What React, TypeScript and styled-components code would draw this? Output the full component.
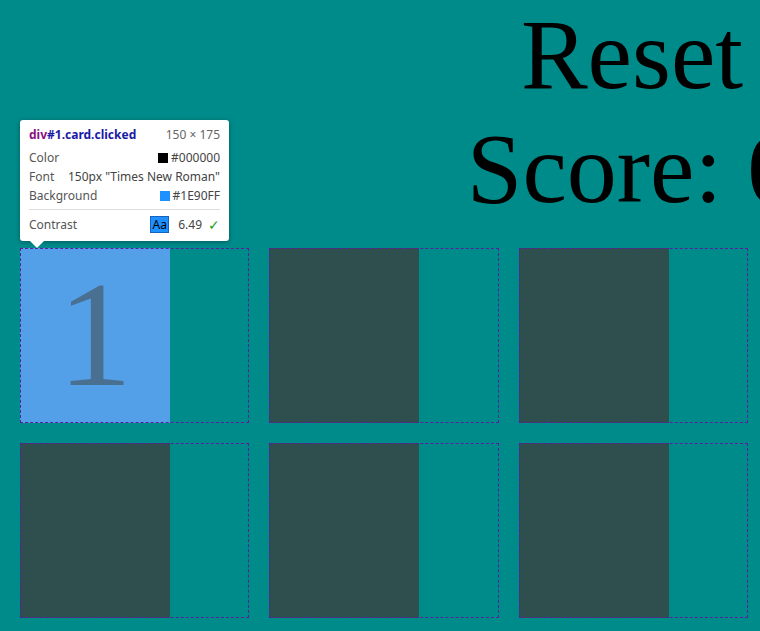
import React from "react";
import styled, { createGlobalStyle } from "styled-components";

const Global = createGlobalStyle`
  html, body { margin: 0; padding: 0; }
  body {
    background: #008b8b;
    font-family: "Liberation Serif", "Times New Roman", serif;
    overflow: hidden;
  }
`;

const Page = styled.div`
  position: relative;
  width: 760px;
  height: 631px;
  overflow: hidden;
`;

const Header = styled.div`
  display: flex;
  flex-direction: column;
  align-items: center;
  margin: -2px 0 0 506px;
  width: 252px;
  font-size: 100px;
  line-height: 114px;
  color: #000;
  white-space: nowrap;
`;

const HeaderLine = styled.div`
  flex: none;
`;

const Grid = styled.div`
  display: grid;
  grid-template-columns: repeat(3, 1fr);
  grid-auto-rows: 175px;
  gap: 20px;
  margin: 22px 12px 0 20px;
`;

const Cell = styled.div`
  position: relative;
  display: flex;
  &::after {
    content: "";
    position: absolute;
    inset: 0;
    border: 1px dashed #5a1e9e;
    pointer-events: none;
  }
`;

const Card = styled.div<{ $clicked?: boolean }>`
  position: relative;
  width: 150px;
  height: 175px;
  background: ${(p) => (p.$clicked ? "#1e90ff" : "#2f4f4f")};
  color: #000;
  font-size: 150px;
  text-align: center;
  font-family: "Liberation Serif", "Times New Roman", serif;
`;

const Highlight = styled.div`
  position: absolute;
  inset: 0;
  background: rgba(111, 168, 220, 0.66);
`;

const Tooltip = styled.div`
  position: absolute;
  left: 20px;
  top: 120px;
  width: 209px;
  box-sizing: border-box;
  padding: 5px 9px 7px 9px;
  background: #fff;
  border-radius: 3px;
  box-shadow: 0 1px 5px rgba(0, 0, 0, 0.35);
  font-family: "Noto Sans", "Open Sans", sans-serif;
  font-size: 12px;
  color: #555;
`;

const Arrow = styled.div`
  position: absolute;
  left: 10px;
  bottom: -7px;
  width: 0;
  height: 0;
  border-left: 7px solid transparent;
  border-right: 7px solid transparent;
  border-top: 7px solid #fff;
`;

const Row = styled.div<{ $gapBelow?: number }>`
  display: flex;
  align-items: center;
  justify-content: space-between;
  height: 19px;
  margin-bottom: ${(p) => p.$gapBelow ?? 0}px;
  white-space: nowrap;
`;

const Title = styled.span`
  font-weight: 700;
  color: #1a1aa6;
`;

const Tag = styled.span`
  color: #881280;
`;

const Dim = styled.span`
  color: #666;
`;

const Value = styled.span`
  display: flex;
  align-items: center;
  gap: 3px;
  color: #444;
`;

const Swatch = styled.span<{ $color: string }>`
  display: inline-block;
  width: 10px;
  height: 10px;
  background: ${(p) => p.$color};
`;

const Divider = styled.div`
  height: 1px;
  background: #ddd;
  margin: 4px 0 5px;
`;

const Badge = styled.span`
  display: inline-flex;
  align-items: center;
  justify-content: center;
  width: 19px;
  height: 17px;
  background: #1e90ff;
  color: #000;
  border: 1px solid #1565c0;
  box-sizing: border-box;
  margin-right: 6px;
`;

const Check = styled.span`
  color: #1f9d1f;
  font-size: 14px;
  margin-left: 3px;
`;

const cards = [1, 2, 3, 4, 5, 6];

export default function App() {
  return (
    <Page>
      <Global />
      <Header>
        <HeaderLine>Reset</HeaderLine>
        <HeaderLine>Score: 0</HeaderLine>
      </Header>
      <Grid>
        {cards.map((n) => (
          <Cell key={n}>
            {n === 1 ? (
              <Card $clicked id="1" className="card clicked">
                1
                <Highlight />
              </Card>
            ) : (
              <Card />
            )}
          </Cell>
        ))}
      </Grid>
      <Tooltip>
        <Row $gapBelow={4}>
          <Title>
            <Tag>div</Tag>#1.card.clicked
          </Title>
          <Dim>150 × 175</Dim>
        </Row>
        <Row>
          <span>Color</span>
          <Value>
            <Swatch $color="#000000" />
            #000000
          </Value>
        </Row>
        <Row>
          <span>Font</span>
          <Value>150px "Times New Roman"</Value>
        </Row>
        <Row>
          <span>Background</span>
          <Value>
            <Swatch $color="#1e90ff" />
            #1E90FF
          </Value>
        </Row>
        <Divider />
        <Row>
          <span>Contrast</span>
          <Value>
            <Badge>Aa</Badge>
            6.49
            <Check>✓</Check>
          </Value>
        </Row>
        <Arrow />
      </Tooltip>
    </Page>
  );
}
